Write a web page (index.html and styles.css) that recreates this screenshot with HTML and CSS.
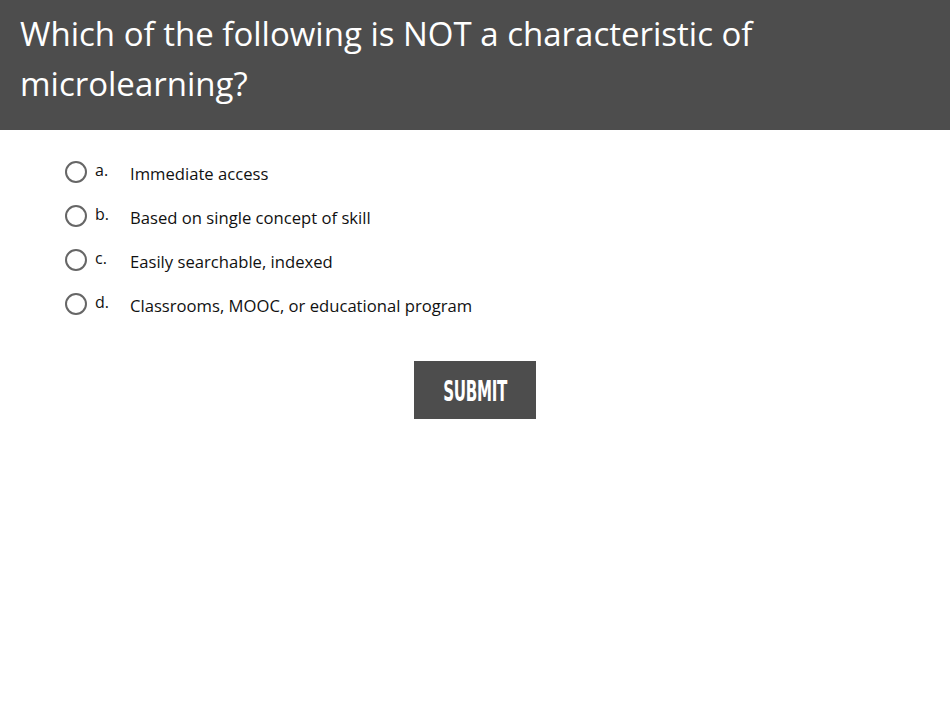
FILE: index.html
```html
<!DOCTYPE html>
<html>
<head>
<meta charset="utf-8">
<link rel="stylesheet" href="styles.css">
</head>
<body>
<header class="question">
  <h1>Which of the following is NOT a characteristic of microlearning?</h1>
</header>
<main class="quiz">
  <ul class="options">
    <li class="option"><span class="radio"></span><span class="letter">a.</span><span class="label">Immediate access</span></li>
    <li class="option"><span class="radio"></span><span class="letter">b.</span><span class="label">Based on single concept of skill</span></li>
    <li class="option"><span class="radio"></span><span class="letter">c.</span><span class="label">Easily searchable, indexed</span></li>
    <li class="option"><span class="radio"></span><span class="letter">d.</span><span class="label">Classrooms, MOOC, or educational program</span></li>
  </ul>
  <div class="actions">
    <button class="submit"><span class="submit-text">SUBMIT</span></button>
  </div>
</main>
</body>
</html>
```

FILE: styles.css
```css
html, body {
  margin: 0;
  padding: 0;
  background: #ffffff;
  font-family: "Open Sans", "Liberation Sans", sans-serif;
}

.question {
  background: #4d4d4d;
  height: 130px;
  box-sizing: border-box;
  padding: 9px 20px 0 20px;
}

.question h1 {
  margin: 0;
  color: #ffffff;
  font-weight: 400;
  font-size: 33px;
  line-height: 50px;
  width: 780px;
}

.quiz {
  padding-top: 20px;
}

.options {
  list-style: none;
  margin: 0;
  padding: 0 0 0 65px;
  display: flex;
  flex-direction: column;
}

.option {
  display: flex;
  align-items: center;
  height: 44px;
  color: #111111;
}

.radio {
  width: 18px;
  height: 18px;
  border: 2px solid #666666;
  border-radius: 50%;
  flex: none;
}

.letter {
  margin-left: 8px;
  width: 35px;
  font-size: 16px;
  position: relative;
  top: -2px;
}

.label {
  font-size: 16.65px;
  position: relative;
  top: 1px;
}

.actions {
  display: flex;
  justify-content: center;
  padding-top: 35px;
}

.submit {
  width: 122px;
  height: 58px;
  background: #4d4d4d;
  border: none;
  padding: 0;
  margin: 0;
  display: flex;
  align-items: center;
  justify-content: center;
}

.submit-text {
  display: inline-block;
  color: #ffffff;
  font-family: "DejaVu Sans Condensed", "DejaVu Sans", sans-serif;
  font-stretch: condensed;
  font-weight: 700;
  font-size: 28px;
  transform: scaleX(0.6);
  letter-spacing: -0.5px;
  position: relative;
  top: 1px;
}
```
